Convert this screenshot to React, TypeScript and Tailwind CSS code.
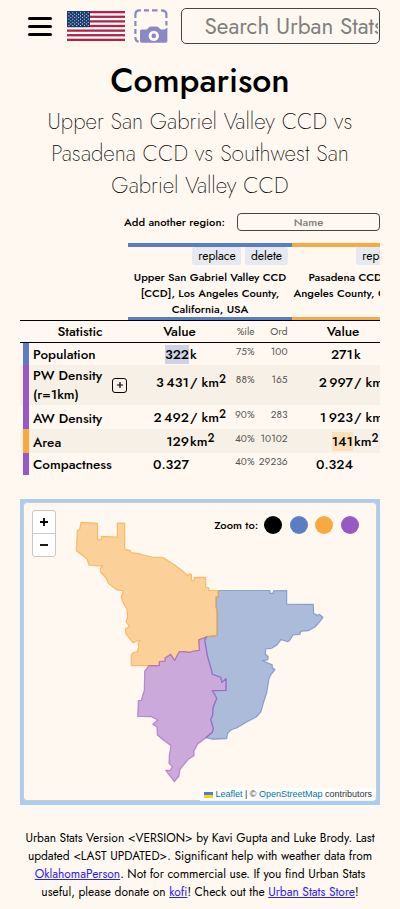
import React from 'react';

const ORANGE =
  '81,522.3 97.5,523.3 97.5,539.7 101.3,539.7 101.3,536.3 117.3,537 117.3,523 124.7,523 124.7,549.3 130,550.3 130.7,552.7 138.3,553.3 143.3,555 151.7,557 163.3,557.7 173.3,564 181.7,570.3 188,575.7 188.7,574 191.3,574 191.7,580.7 194.3,580.7 194.3,577.3 205.7,577.3 205.7,587.5 208.7,587.7 208.7,590.5 218.3,590.5 218.3,596.7 216,597 216,607.3 217,610 217,635.3 206.7,636.7 198.7,639.7 199.3,650.3 193.3,651 190,652.3 185,651.7 179.3,651.7 177.3,655 174.7,660.3 170.7,654.3 168,656 165,658 165,661 159.3,661.7 159.3,665.7 131.3,665.7 131.3,655 133,653 137.3,651.3 138.7,646.7 138,643 140,640.3 136.3,641 133.3,643 129.3,638.3 125.7,633.3 125.3,628.7 129.3,626.7 126,621.7 127.7,616.7 127,609.3 123.3,603.3 121.3,597.3 123.3,591 116.7,589.7 108.3,583.3 106,578 100.7,572 100.3,568.7 102.7,565.7 97,566 89,565 87,559 81.7,554.7 76.3,550.7 77.3,531 79.7,529';
const BLUE =
  '218.3,590.5 269.7,590.5 270.3,593.3 273,593.3 273.7,590.7 286.7,590.5 286.7,604 313.3,604.3 313.7,614 316,614 316.7,615.7 319.3,614.3 323,617.3 319.3,622.3 315,627 308.3,630.7 300.7,631.3 300,634.3 293,635 290,640 287.7,641.7 281,639.7 276.7,645.3 271.7,648.3 265.7,649 265.3,654 268.3,656.7 267.7,660 262.7,660.7 272.3,664.7 272.3,667.5 275,669.7 271,674.5 269,678.7 266.7,692.7 263.3,703.3 261,711.7 256.7,716.7 245,723 236.7,728 231.3,729.7 227.7,733.3 226.7,738.7 213.3,739.3 205.7,737.7 212.3,732.3 213.3,728.3 210.7,719.3 212.7,715 213,707.7 216.7,698.3 215,695 212.3,690.7 226,690.3 226,678.7 222,682.3 220.7,677.3 212.3,674.3 211.3,669.3 207.3,655.7 204.7,640 206.7,636.7 217,635.3 217,610 216,607.3 216,597 218.3,596.7';
const PURPLE =
  '206.7,636.7 204.7,640 207.3,655.7 211.3,669.3 212.3,674.3 220.7,677.3 222,682.3 226,678.7 226,690.3 212.3,690.7 215,695 216.7,698.3 213,707.7 212.7,715 210.7,719.3 213.3,728.3 212.3,732.3 206,737.7 197.7,744 194,751 194,755.7 188.3,759.3 180,769.3 179,776 174.3,781.7 165.7,770.3 170.3,770.3 172.3,766.7 169,763.3 169.3,755 171,745.7 163.3,740 157.3,735 157,727 152.7,724.3 157.7,720 151.3,716.7 137.7,716.3 138.3,700.7 141.3,700.3 144.3,690 144.7,671 149,665.7 159.3,665.7 159.3,661.7 165,661 165,658 168,656 170.7,654.3 174.7,660.3 177.3,655 179.3,651.7 185,651.7 190,652.3 193.3,651 199.3,650.3 198.7,639.7';

function Flag() {
  const stars: [number, number][] = [];
  for (let r = 0; r < 9; r++) {
    const n = r % 2 === 0 ? 6 : 5;
    for (let c = 0; c < n; c++) {
      stars.push([1.95 + c * 3.85 + (r % 2) * 1.92, 1.7 + r * 1.6]);
    }
  }
  return (
    <svg className="h-[30px] w-[58px]" viewBox="0 0 58 30">
      <rect width="58" height="30" fill="#fff" />
      {[0, 1, 2, 3, 4, 5, 6].map((i) => (
        <rect key={i} y={(i * 60) / 13} width="58" height={30 / 13} fill="#b22346" />
      ))}
      <rect width="23" height="16.15" fill="#153a6b" />
      {stars.map(([x, y], i) => (
        <circle key={i} cx={x} cy={y} r="0.55" fill="#fff" />
      ))}
    </svg>
  );
}

function Screenshot() {
  return (
    <svg className="h-[34px] w-[34px]" viewBox="0 0 34 34" fill="none">
      <g stroke="#8a89c3" strokeWidth="2.2">
        <path d="M1.4 9V5.5Q1.4 1.4 5.5 1.4H7M10 1.4H15M18 1.4H23.5M27 1.4Q32.2 1.4 32.4 5V9M32.4 12V16.5M1.4 12V17M1.4 20V25M1.4 28Q1.4 32.4 4.6 32.7" />
      </g>
      <path
        fill="#8a89c3"
        fillRule="evenodd"
        d="M6 22.2Q6 20.4 7.8 20.4H12.2Q13.3 20.4 13.9 19.3Q15 17.4 17 17.4H22.3Q24.3 17.4 25.2 19.1Q26 20.4 27.3 20.4H30.5L33.4 18.6V32Q33.4 33.8 31.6 33.8H7.8Q6 33.8 6 32ZM19.8 21.7A5.2 5.2 0 1 0 19.8 32.1A5.2 5.2 0 1 0 19.8 21.7Z"
      />
      <circle cx="19.8" cy="26.9" r="2.3" fill="#8a89c3" />
    </svg>
  );
}

function Km2({ per }: { per?: boolean }) {
  return (
    <>
      {per && <span className="mr-[4px]">/</span>}km
      <span className="relative -top-[4px] text-[11.5px]">2</span>
    </>
  );
}

type Cell = { n: React.ReactNode; unit?: React.ReactNode; hl?: string; pct?: string; ord?: string; lift?: string };

function Thousands({ a, b }: { a: string; b: string }) {
  return (
    <>
      <span className="mr-[2.5px]">{a}</span>
      {b}
    </>
  );
}

function ValueCell({ n, unit, hl, pct, ord, lift }: Cell) {
  return (
    <div className={`flex w-[164px] shrink-0 items-center whitespace-nowrap ${lift ?? ''}`}>
      <div className="flex w-[61px] justify-end text-[13.5px] font-medium">
        <span className={`h-[19px] leading-[20px] ${hl ?? ''}`}>{n}</span>
      </div>
      <div className="w-[37px] pt-[1px] pl-[1px] text-[13.5px] leading-[19px] font-medium">{unit}</div>
      <div className="-mt-[5px] w-[28.5px] text-right text-[10.125px] leading-[14px] text-[#555]">{pct}</div>
      <div className="-mt-[5px] flex w-[33px] justify-end text-[10.125px] leading-[14px] text-[#555]">{ord}</div>
    </div>
  );
}

function Row({ h, bar, bg, label, plus, a, b, top = 'pt-[1px]' }: { h: string; bar: string; bg?: string; label: React.ReactNode; plus?: boolean; a: Cell; b: Cell; top?: string }) {
  return (
    <div className={`flex w-[360px] overflow-hidden ${h} ${bg ?? ''}`}>
      <div className="flex w-[108px] shrink-0 items-center pl-[3px]">
        <div className={`w-[6px] self-stretch ${bar}`} />
        <div className={`pl-[4px] text-[13.5px] leading-[19px] font-medium whitespace-nowrap ${top}`}>{label}</div>
        {plus && (
          <div className="mr-[1px] ml-auto flex h-[15px] w-[15px] items-center justify-center rounded-[3px] border border-black">
            <svg className="h-[6px] w-[6px]" viewBox="0 0 6 6" stroke="#000" strokeWidth="1.2">
              <path d="M3 0V6M0 3H6" />
            </svg>
          </div>
        )}
      </div>
      <ValueCell {...a} />
      <ValueCell {...b} />
    </div>
  );
}

function Region({ color, lines }: { color: string; lines: React.ReactNode }) {
  return (
    <div className={`h-[77px] w-[164px] shrink-0 border-t-4 border-b-[3px] ${color}`}>
      <div className="flex h-[18px] justify-end gap-[4px] pr-[4px] text-[12px] leading-[18px]">
        <span className="w-[49px] rounded-[3px] bg-[#e6e9ef] pl-[1px] text-center">replace</span>
        <span className="w-[43px] rounded-[3px] bg-[#e6e9ef] text-center">delete</span>
      </div>
      <div className="mt-[4px] text-center text-[11.25px] leading-[16px] font-medium whitespace-nowrap">{lines}</div>
    </div>
  );
}

export default function App() {
  return (
    <div className="h-[909px] w-[400px] overflow-hidden bg-[#fff8f0] font-['Jost','Lato',sans-serif] text-black">
      <header className="flex h-[52px] items-start pr-[20px] pl-[28px]">
        <div className="mt-[17px] flex w-[24px] flex-col gap-[5px]">
          <div className="h-[3px] rounded-full bg-black" />
          <div className="h-[3px] rounded-full bg-black" />
          <div className="h-[3px] rounded-full bg-black" />
        </div>
        <div className="mt-[11px] ml-[15px]"><Flag /></div>
        <div className="mt-[9px] ml-[9px]"><Screenshot /></div>
        <div className="mt-[8px] ml-[13px] h-[36px] w-[199px] rounded-[5px] border border-[#444] pr-[1px] pl-[22.5px]">
          <div className="overflow-hidden text-[22.5px] leading-[34px] whitespace-nowrap text-[#808080]">Search Urban Stats</div>
        </div>
      </header>

      <h1 className="mt-[9px] text-center text-[33.75px] leading-[40px] font-medium">Comparison</h1>
      <h2 className="mt-[4px] text-center text-[22.5px] leading-[32px] font-extralight whitespace-nowrap">
        <div>Upper San Gabriel Valley CCD vs</div>
        <div>Pasadena CCD vs Southwest San</div>
        <div>Gabriel Valley CCD</div>
      </h2>

      <div className="mt-[12px] flex h-[18px] items-center justify-end pr-[20px]">
        <div className="mr-[12px] text-[11.25px] font-medium whitespace-nowrap">Add another region:</div>
        <div className="h-[18px] w-[143px] rounded-[4px] border border-[#444] text-center text-[11.25px] leading-[17px] font-medium text-[#808080]">Name</div>
      </div>

      <section className="mx-[20px] mt-[12px] w-[360px]">
        <div className="flex overflow-hidden pl-[108px]">
          <Region color="border-[#5a7dc3]" lines={<><div>Upper San Gabriel Valley CCD</div><div>[CCD], Los Angeles County,</div><div>California, USA</div></>} />
          <Region color="border-[#f7aa41]" lines={<><div>Pasadena CCD [CCD], Los</div><div>Angeles County, California, USA</div></>} />
        </div>
        <div className="flex h-[23px] items-center overflow-hidden border-t border-b border-black pt-[1px] font-medium whitespace-nowrap">
          <div className="w-[120px] shrink-0 text-center text-[13.5px]">Statistic</div>
          <div className="-ml-[12px] w-[103px] shrink-0 text-center text-[13.5px]">Value</div>
          <div className="w-[23.5px] shrink-0 text-right text-[10.125px] font-normal text-[#555]">%ile</div>
          <div className="w-[33px] shrink-0 text-right text-[10.125px] font-normal text-[#555]">Ord</div>
          <div className="ml-[4px] w-[103px] shrink-0 text-center text-[13.5px]">Value</div>
        </div>
        <Row h="h-[22px]" bar="bg-[#5a7dc3]" label="Population" a={{ n: '322', unit: 'k', hl: 'bg-[#ced2e3]', pct: '75%', ord: '100' }} b={{ n: '271', unit: 'k' }} />
        <Row h="h-[40px]" bar="bg-[#975ac4]" bg="bg-[#f7f0e6]" plus top="pb-[1px]" label={<>PW Density<br />(r=1km)</>} a={{ n: <Thousands a="3" b="431" />, unit: <Km2 per />, pct: '88%', ord: '165', lift: 'pb-[6px]' }} b={{ n: <Thousands a="2" b="997" />, unit: <Km2 per />, lift: 'pb-[6px]' }} />
        <Row h="h-[24px] pt-[1px]" top="pt-[1px]" bar="bg-[#975ac4] -mt-[1px]" label="AW Density" a={{ n: <Thousands a="2" b="492" />, unit: <Km2 per />, pct: '90%', ord: '283' }} b={{ n: <Thousands a="1" b="923" />, unit: <Km2 per /> }} />
        <Row h="h-[24px] pt-[1px]" top="pt-[1px]" bar="bg-[#f7aa41] -mt-[1px]" bg="bg-[#f7f0e6]" label="Area" a={{ n: '129', unit: <Km2 />, pct: '40%', ord: '10102' }} b={{ n: '141', unit: <Km2 />, hl: 'bg-[#fde0b8]' }} />
        <Row h="h-[22px]" bar="bg-[#975ac4]" label="Compactness" a={{ n: '0.327', pct: '40%', ord: '29236' }} b={{ n: '0.324' }} />
      </section>

      <section className="relative mx-[20px] mt-[24px] h-[306px] w-[360px] border-[3px] border-b-4 border-[#abcdef] bg-[#abcdef]">
        <div className="h-full w-full overflow-hidden rounded-[4px] border border-[#ccc] bg-[#fff8f0]">
          <svg className="absolute -top-[3px] -left-[3px] h-[306px] w-[360px]" viewBox="20 499 360 306" strokeLinejoin="round" strokeWidth="1.2">
            <polygon points={BLUE} fill="#5a7dc3" fillOpacity="0.5" stroke="#5a7dc3" strokeOpacity="0.6" />
            <polygon points={ORANGE} fill="#f7aa41" fillOpacity="0.5" stroke="#f7aa41" strokeOpacity="0.7" />
            <polygon points={PURPLE} fill="#975ac4" fillOpacity="0.5" stroke="#975ac4" strokeOpacity="0.6" />
          </svg>
          <div className="absolute top-[8px] left-[9px] flex h-[47px] w-[24px] flex-col rounded-[3px] border border-[#ccc6c0] bg-white">
            <div className="flex h-[23px] items-center justify-center border-b border-[#ccc]">
              <svg className="h-[8px] w-[8px]" viewBox="0 0 8 8" stroke="#000" strokeWidth="1.8"><path d="M4 0V8M0 4H8" /></svg>
            </div>
            <div className="flex h-[22px] items-center justify-center">
              <svg className="h-[8px] w-[8px]" viewBox="0 0 8 8" stroke="#000" strokeWidth="1.8"><path d="M0 4H8" /></svg>
            </div>
          </div>
          <div className="absolute top-[14px] right-[18px] flex items-center gap-[7.7px]">
            <div className="-mr-[2px] text-[11.25px] font-medium">Zoom to:</div>
            <div className="h-[18px] w-[18px] rounded-full bg-black" />
            <div className="h-[18px] w-[18px] rounded-full bg-[#5a7dc3]" />
            <div className="h-[18px] w-[18px] rounded-full bg-[#f7aa41]" />
            <div className="h-[18px] w-[18px] rounded-full bg-[#975ac4]" />
          </div>
          <div className="absolute right-[1px] bottom-0 flex h-[13px] items-center rounded-br-[4px] bg-white/80 px-[4px] font-['Liberation_Sans',Arial,sans-serif] text-[9px] leading-[13px] whitespace-pre text-[#333]">
            <svg className="mr-[2.5px] h-[6px] w-[9px]" viewBox="0 0 9 6"><rect width="9" height="3" fill="#4c7be1" /><rect y="3" width="9" height="3" fill="#ffd500" /></svg>
            <span className="text-[#0078a8]">Leaflet</span>{' | © '}<span className="text-[#0078a8]">OpenStreetMap</span>{' contributors'}
          </div>
        </div>
      </section>

      <footer className="mt-[24px] text-center text-[12px] leading-[18px] whitespace-nowrap">
        <div>Urban Stats Version &lt;VERSION&gt; by Kavi Gupta and Luke Brody. Last</div>
        <div>updated &lt;LAST UPDATED&gt;. Significant help with weather data from</div>
        <div><a className="text-[#2a22ee] underline">OklahomaPerson</a>. Not for commercial use. If you find Urban Stats</div>
        <div>useful, please donate on <a className="text-[#2a22ee] underline">kofi</a>! Check out the <a className="text-[#2a22ee] underline">Urban Stats Store</a>!</div>
      </footer>
    </div>
  );
}
